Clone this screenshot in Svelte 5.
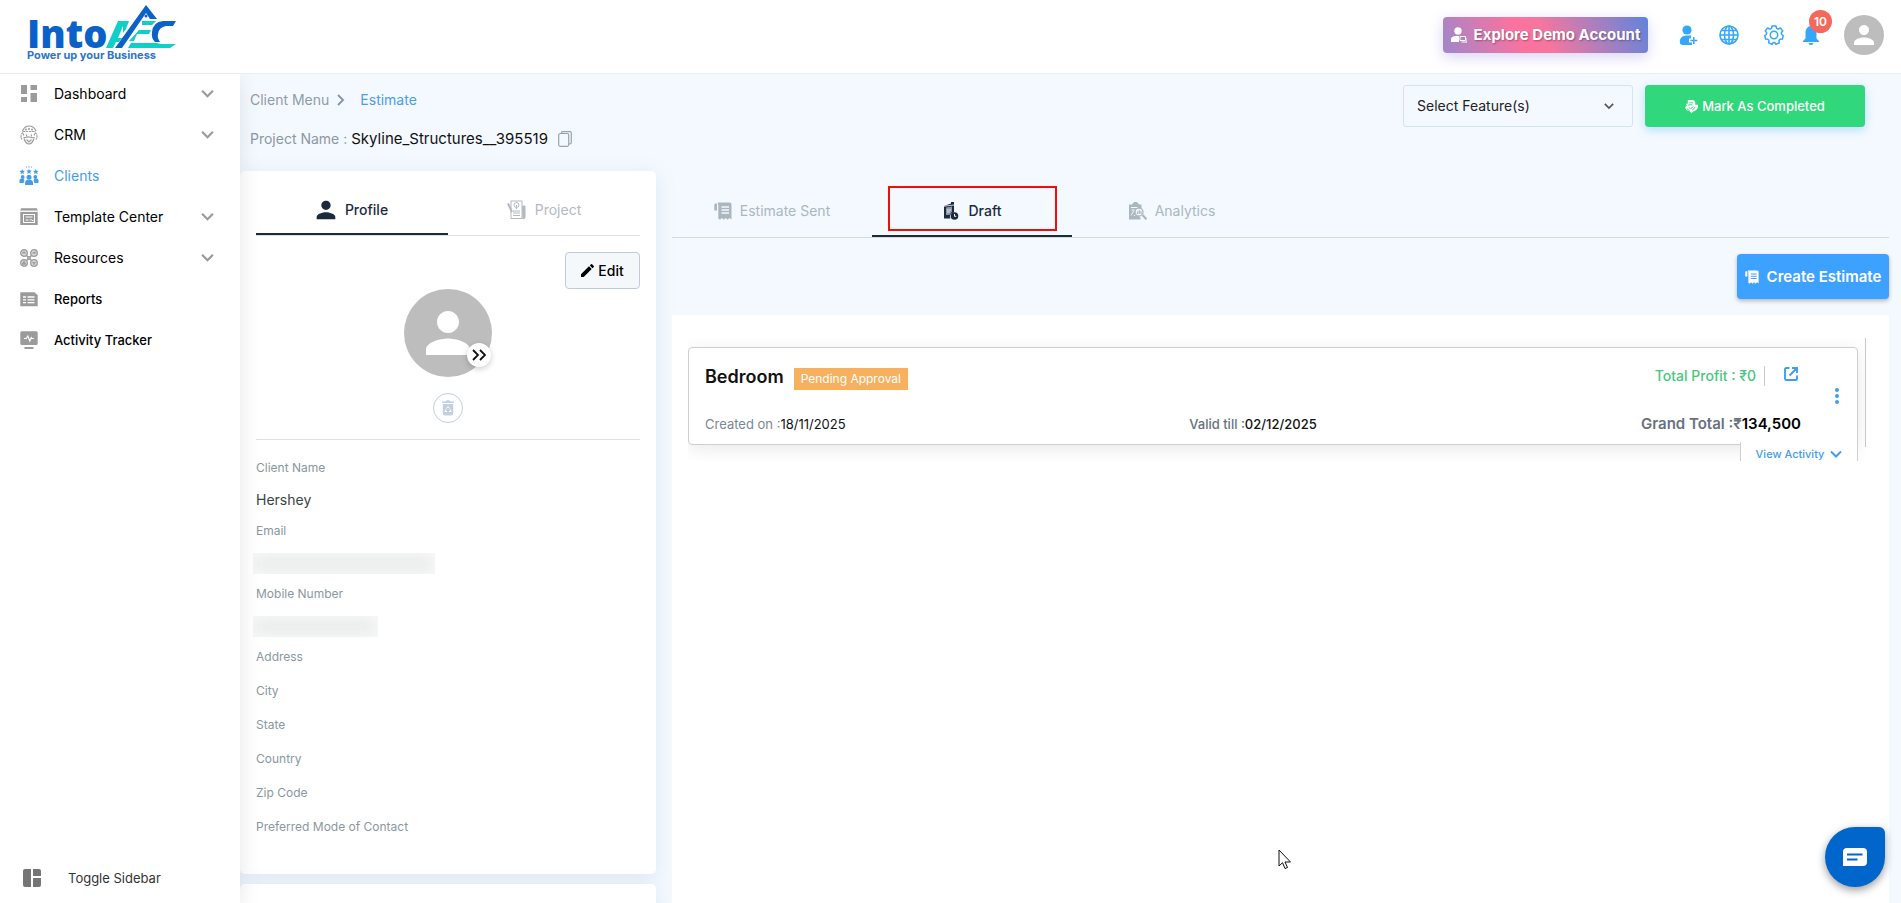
<script>
  const nav = [
    { label: 'Dashboard', icon: 'dashboard', more: true },
    { label: 'CRM', icon: 'crm', more: true },
    { label: 'Clients', icon: 'clients', active: true },
    { label: 'Template Center', icon: 'template', more: true },
    { label: 'Resources', icon: 'resources', more: true },
    { label: 'Reports', icon: 'reports', strong: true },
    { label: 'Activity Tracker', icon: 'activity', strong: true }
  ];
  const fields = [
    { label: 'Client Name', value: 'Hershey' },
    { label: 'Email', masked: 182 },
    { label: 'Mobile Number', masked: 125 },
    { label: 'Address' },
    { label: 'City' },
    { label: 'State' },
    { label: 'Country' },
    { label: 'Zip Code' },
    { label: 'Preferred Mode of Contact' }
  ];
</script>

{#snippet chevron(w)}
  <svg width={w} height={w} viewBox="0 0 12 12" fill="none" stroke="currentColor" stroke-width="2" aria-hidden="true"><path d="M1 3.5 6 8.5 11 3.5" /></svg>
{/snippet}

{#snippet receipt(w)}
  <svg width={w} height={w} viewBox="0 0 18 18" aria-hidden="true">
    <path fill="currentColor" d="M1.8 1.5C.8 1.5.3 2.200.3 3v5.500h2.700V1.500zM5 .5h10.500a2 2 0 0 1 2 2V17.500l-2-1.600-1.900 1.900-1.900-1.900-1.900 1.900-1.900-1.900-1.900 1.900-1.700-1.400V4.500C4.200 2.700 4.300 1.500 3.300.8z" />
    <path stroke="var(--cut)" stroke-width="1.300" d="M7.500 5H15M7.500 8H15M7.500 11H15" />
  </svg>
{/snippet}

{#snippet person()}
  <svg class="person" viewBox="0 0 24 24" aria-hidden="true"><path fill="currentColor" d="M12 12c2.210 0 4-1.790 4-4s-1.790-4-4-4-4 1.790-4 4 1.790 4 4 4zm0 2c-2.670 0-8 1.340-8 4v2h16v-2c0-2.660-5.330-4-8-4z" /></svg>
{/snippet}

{#snippet navIcon(name)}
  <svg width="20" height="20" viewBox="0 0 20 20" fill="currentColor" aria-hidden="true">
    {#if name === 'dashboard'}
      <path d="M2 1h6v9H2zM11.500 1H18v5h-6.500zM2 13h6v5H2zM11.500 9H18v9h-6.500z" />
    {:else if name === 'crm'}
      <g fill="none" stroke="currentColor" stroke-width="1.200">
        <path d="M3.500 6C5 2.500 7.500 1 10 1s5.500 1.500 7 5" />
        <path d="M3.500 6.500h13M4 7.500C1.500 9 1.500 12.500 3 14.500M16 7.500c2.500 1.500 2.500 5 1 7" stroke-dasharray="2.500 .7" />
        <path d="M4.500 12c1 1.500 3.500-.5 5.500 0s4.500 1.500 5.500 0M5 13.500c1 3 3 5.500 5 5.500s4-2.500 5-5.500M7.500 14.500 10 17l2.500-2.500" />
        <path d="M4.500 8.500v2M15.500 8.500v2M7.500 9.500v2M12.500 9.500v2" />
      </g>
      <circle cx="7" cy="4.600" r="1" /><circle cx="10" cy="4" r="1" /><circle cx="13" cy="4.600" r="1" />
    {:else if name === 'clients'}
      <path d="m3.200 3 .8 1.700 1.900.2-1.400 1.300.4 1.900-1.700-.9-1.700.9.400-1.900L.5 4.900l1.900-.2zM10 2.700l.8 1.700 1.900.2-1.400 1.300.4 1.900-1.700-.9-1.700.9.400-1.900-1.400-1.300 1.900-.2zM16.800 3l.8 1.700 1.900.2-1.400 1.300.4 1.900-1.700-.9-1.700.9.400-1.900-1.400-1.300 1.900-.2z" />
      <circle cx="3.700" cy="11" r="1.900" /><circle cx="10" cy="11.200" r="2.500" /><circle cx="16.300" cy="11" r="1.900" />
      <path d="M.5 17v-1.500a2.500 2.500 0 0 1 5-.8c-.6.600-.8 1.300-.8 2.300zM6 19v-2a4 3.200 0 0 1 8 0v2zM19.500 17v-1.500a2.500 2.500 0 0 0-5-.8c.6.600.8 1.300.8 2.300z" />
      <path d="M10 0v1.600M7.200.4l.5 1.300M12.800.4l-.5 1.300" stroke="currentColor" stroke-width=".8" />
    {:else if name === 'template'}
      <path d="M1.300 4.700h17.400V18H1.300zM2 1.200h16l.7 2.600H1.300z" />
      <g fill="none" stroke="#fff" stroke-width="1"><rect x="4.500" y="7.500" width="11" height="8" /><path d="M6.500 10h7M6.500 13h3M11 13.500l1-1.200 1 1.200h1.500M2 4.200h16" /></g>
    {:else if name === 'resources'}
      <g fill="#d9d9d9" stroke="currentColor" stroke-width="1.300">
        <path fill="none" d="M7 7l6 6M13 7l-6 6" />
        <circle cx="5" cy="5" r="3.300" /><circle cx="15" cy="5" r="3.300" /><circle cx="5" cy="15" r="3.300" /><circle cx="15" cy="15" r="3.300" />
        <path fill="none" d="M3.500 5.500 5 4l1.500 1.500M13.500 5H16V3.500M3.500 16h3L5 13.500zM13.500 14 15 15.500l1.500-1.500M15 15.500V17" />
        <circle cx="10" cy="10" r="1.300" />
      </g>
    {:else if name === 'reports'}
      <path d="M1.300 3.200h14L18.700 6v11.200H1.300z" />
      <path d="M4 8h3M8.500 8h7M4 10.800h3M8.500 10.800h7M4 13.600h3M8.500 13.600h7" stroke="#fff" stroke-width="1.300" />
    {:else}
      <path d="M2.800 1.300h14.400a1.500 1.500 0 0 1 1.500 1.500v10.700a1.500 1.500 0 0 1-1.500 1.500H2.800a1.500 1.500 0 0 1-1.500-1.500V2.800a1.500 1.500 0 0 1 1.500-1.500zM5.500 17h9v2h-9z" />
      <path d="M5 8.500h2.300L8.800 6l2 5 1.500-3.500.8 1H15" fill="none" stroke="#fff" stroke-width="1.100" />
    {/if}
  </svg>
{/snippet}

<div class="shell">
  <header class="topbar">
    <a class="logo" href="#home" aria-label="IntoAEC, Power up your Business">
      <svg width="152" height="60" viewBox="0 0 152 60">
        <text x="0" y="43" font-size="38" font-weight="800" fill="#0a62c9">Into</text>
        <path fill="#10cfc9" d="M79 43 91 16h11l-3 8-3 4v-7l-5 12h4l-3 4h-3l-3 6z" />
        <path fill="#10cfc9" d="M104 38h26l4 1h15l-6 4h-42z" />
        <path fill="#10cfc9" d="M115 16h14l-4 4h-10zM112 25h12l-2 4h-12l-3 7h-5z" />
        <path fill="#0a62c9" d="M88 43 119 0l11 14h-7l-4-6-24 35z" />
        <path fill="#0a62c9" d="M149 16h-13q-10 1-11 11-1 6 3 10h5q-3-4-2-8 1-7 8-8h7z" />
        <circle cx="119" cy="11" r="1.500" fill="#0a62c9" />
        <text x="0" y="54" font-size="11" font-weight="700" fill="#2f74cc" class="tagline">Power up your Business</text>
      </svg>
    </a>
    <div class="actions">
      <button class="demo">
        <svg width="16" height="16" viewBox="0 0 16 16" aria-hidden="true"><circle cx="7" cy="4" r="3.700" fill="#fff" /><path fill="#fff" d="M0 15v-2.500C0 9.500 3 9 5 9h3v6z" /><path fill="none" stroke="#fff" d="M9 9.500h5.500v4H9zM10.500 15H16v-4" /></svg>
        Explore Demo Account
      </button>
      <button class="icon-btn add" aria-label="Add user">
        <svg width="20" height="20" viewBox="0 0 20 20"><circle cx="8" cy="5" r="4.600" fill="currentColor" /><path fill="currentColor" d="M8 10.500h4v3h-2v4h3V20H4a3.200 3.200 0 0 1-3.200-3.200C.8 12.500 4 10.500 8 10.500z" /><path stroke="currentColor" stroke-width="1.500" d="M14.800 12v7M11.300 15.500h7" /></svg>
      </button>
      <button class="icon-btn globe" aria-label="Language">
        <svg width="20" height="20" viewBox="0 0 20 20" fill="none" stroke="currentColor" stroke-width="1.600"><circle cx="10" cy="10" r="9" /><ellipse cx="10" cy="10" rx="4.500" ry="9" /><path d="M10 1v18M1 10h18M2.500 5.500h15M2.500 14.500h15" /></svg>
      </button>
      <button class="icon-btn gear" aria-label="Settings">
        <svg width="20" height="20" viewBox="0 0 20 20" fill="none" stroke="currentColor" stroke-width="1.500"><path stroke-linejoin="round" d="M8 1h4l.5 2.300 1.600.8 2.300-1.100 2.400 2.900-1.500 1.900.4 1.700 1.500 1-.8 3.500-2.300.2-1.100 1.400.3 2.300-3.300 1.400L10.700 17.500H9.300L8 19.300l-3.300-1.400.3-2.300-1.100-1.400-2.300-.2-.8-3.500 1.500-1 .4-1.700L1.200 5.900 3.600 3l2.300 1.100 1.600-.8z" /><circle cx="10" cy="10" r="3.700" /></svg>
      </button>
      <button class="icon-btn bell" aria-label="Notifications, 10 new">
        <svg width="18" height="20" viewBox="0 0 18 20" fill="currentColor"><path d="M9 1c4 .6 5.500 3.500 5.500 7v5.500L17 16v1H1v-1l2.500-2.500V8C3.500 4.500 5 1.600 9 1zM6.500 18h5a2.500 2 0 0 1-5 0z" /></svg>
        <span class="badge">10</span>
      </button>
      <button class="avatar small" aria-label="Account">{@render person()}</button>
    </div>
  </header>

  <div class="body">
    <aside class="sidebar">
      <nav>
        {#each nav as item}
          <a href="#nav" class:active={item.active} class:strong={item.strong}>
            <span class="nav-icon">{@render navIcon(item.icon)}</span>
            <span class="nav-label">{item.label}</span>
            {#if item.more}<span class="nav-more">{@render chevron(13)}</span>{/if}
          </a>
        {/each}
      </nav>
      <button class="toggle">
        <svg width="18" height="18" viewBox="0 0 18 18" fill="#757575" aria-hidden="true"><path d="M2 0h6v18H2a2 2 0 0 1-2-2V2a2 2 0 0 1 2-2zM10 0h6a2 2 0 0 1 2 2v5h-8zM10 9h8v7a2 2 0 0 1-2 2h-6z" /></svg>
        Toggle Sidebar
      </button>
    </aside>

    <main>
      <section class="page-head">
        <div>
          <div class="crumbs">
            <a href="#clients">Client Menu</a>
            <svg width="8" height="12" viewBox="0 0 8 12" fill="none" stroke="#8a97a8" stroke-width="2" aria-hidden="true"><path d="M1 1l5 5-5 5" /></svg>
            <a class="here" href="#estimate">Estimate</a>
          </div>
          <div class="project">
            <span class="muted">Project Name :</span>
            <span class="project-name">Skyline_Structures__395519</span>
            <button class="copy" aria-label="Copy project name">
              <svg width="14" height="16" viewBox="0 0 14 16" fill="none" stroke="#98a4ae" stroke-width="1.200"><rect x=".7" y="2.500" width="10" height="12.800" rx="1.500" /><path d="M3.500 2.500V1.800q0-1.100 1.100-1.100h7.300q1.400 0 1.400 1.400v9.500q0 1.400-1.400 1.400h-1" /></svg>
            </button>
          </div>
        </div>
        <div class="head-actions">
          <div class="select">
            <select aria-label="Select Feature(s)"><option>Select Feature(s)</option></select>
            {@render chevron(10)}
          </div>
          <button class="done">
            <svg width="13" height="13" viewBox="0 0 14 14" aria-hidden="true"><path fill="#fff" d="M3 0h6l2 2v3h3v3l-2 3-3 1.500L7 14l-2-2-3-1-2-3 2-2-1-2h2z" /><path fill="none" stroke="#30d77b" d="M4.500 3h4M3 5.500l5-.5M4 8l2 1.500L9 7M2 9.500l3 2M11 7.500 8 11" /></svg>
            Mark As Completed
          </button>
        </div>
      </section>

      <div class="columns">
        <div class="left">
          <section class="card">
            <div class="card-tabs">
              <button class="on">{@render person()}Profile</button>
              <button>
                <svg width="19" height="20" viewBox="0 0 19 20" fill="none" stroke="currentColor" aria-hidden="true"><path fill="currentColor" d="M15.500 6H18v12l-2 1z" /><rect x="4" y="1" width="11" height="17.500" /><circle cx="9.500" cy="5" r="2.500" /><path d="M9.500 5v4M6 11h7M6 13h7M6 15.500h7" /><path stroke-width="2" d="M1 3.500 5 12" /></svg>
                Project
              </button>
            </div>
            <div class="edit-row">
              <button class="edit">
                <svg width="13" height="13" viewBox="3 3 18 18" aria-hidden="true"><path d="M3 17.250V21h3.750L17.810 9.940l-3.750-3.750L3 17.250zM20.710 7.040a1 1 0 0 0 0-1.410l-2.340-2.340a1 1 0 0 0-1.410 0l-1.830 1.830 3.750 3.750 1.830-1.830z" /></svg>
                Edit
              </button>
            </div>
            <div class="photo">
              <div class="avatar large">
                {@render person()}
                <button class="swap" aria-label="Change photo">
                  <svg width="14" height="12" viewBox="0 0 14 12" fill="none" stroke="#111" stroke-width="1.800"><path d="M1 1l5 5-5 5M8 1l5 5-5 5" /></svg>
                </button>
              </div>
              <button class="trash" aria-label="Remove photo">
                <svg width="12" height="16" viewBox="0 0 12 16"><path fill="#c3cfdf" d="M0 1.500h3.500L4.500.3h3l1 1.200H12V3H0zM.8 4h10.400v9.500a2 2 0 0 1-2 2H2.800a2 2 0 0 1-2-2z" /><path fill="none" stroke="#fff" d="M4.500 8.500 6 6.500l1.500 2M8.300 9.500l.7 2H7M5 11.500H3l.8-2" /></svg>
              </button>
            </div>
            <dl>
              {#each fields as f}
                <dt>{f.label}</dt>
                <dd class:filled={f.value || f.masked}>
                  {#if f.masked}<span class="mask" style="width: {f.masked}px"></span>{:else}{f.value ?? ''}{/if}
                </dd>
              {/each}
            </dl>
          </section>
          <section class="card next"></section>
        </div>

        <div class="right">
          <div class="tabs">
            <button>{@render receipt(18)}Estimate Sent</button>
            <button class="on">
              <svg width="16" height="18" viewBox="0 0 16 18" aria-hidden="true"><path fill="currentColor" d="M1 4 8 1.500V0h3v10.500a4 4 0 0 0-3.500 6H1z" /><path fill="#8d97a5" d="M3 5.500 9 4.500v5L6.500 13H3z" /><path stroke="#f4f9ff" stroke-width=".8" d="M1 4.200 11 3M4 8h4M4 10h3" /><circle cx="11.500" cy="14" r="3.800" fill="currentColor" /><path fill="none" stroke="#fff" d="M11.500 12v2.300h1.800" /></svg>
              Draft
              <span class="highlight"></span>
            </button>
            <button>
              <svg width="18" height="18" viewBox="0 0 18 18" aria-hidden="true"><path fill="currentColor" d="M0 2.500h3L5 0h3l2 2.500h2.500v4a5 5 0 0 0-1 9V17.500H0z" /><path fill="none" stroke="#f4f9ff" d="M2 5.500h7M2 13.500l3-5M5 14l2-2M2.500 8h3" /><circle cx="10" cy="10" r="4" fill="#f4f9ff" stroke="currentColor" stroke-width="1.300" /><path fill="none" stroke="currentColor" stroke-width="1.200" d="M8.500 12v-2.500M10.200 12V8M12 12v-3" /><path stroke="currentColor" stroke-width="2.200" d="m13.500 13 4 4.300" /></svg>
              Analytics
            </button>
          </div>
          <div class="create-row">
            <button class="create">{@render receipt(14)}Create Estimate</button>
          </div>
          <div class="panel">
            <div class="list">
              <article>
                <div class="grid">
                  <div class="title"><h2>Bedroom</h2><span class="status">Pending Approval</span></div>
                  <div class="profit">
                    <span>Total Profit : ₹0</span><i></i>
                    <button aria-label="Open estimate">
                      <svg width="14" height="14" viewBox="0 0 14 14" fill="none" stroke="currentColor" stroke-width="1.900"><path d="M5.500 1H2.300Q1 1 1 2.300v9.400Q1 13 2.300 13h9.400q1.300 0 1.300-1.300V8.500M8 1h5v5M13 1 5.500 8.500" /></svg>
                    </button>
                  </div>
                  <div class="created"><span>Created on :</span>18/11/2025</div>
                  <div class="valid"><span>Valid till :</span>02/12/2025</div>
                  <div class="total"><span>Grand Total :₹</span>134,500</div>
                </div>
                <button class="kebab" aria-label="More options">
                  <svg width="6" height="16" viewBox="0 0 6 16" fill="currentColor"><circle cx="3" cy="2" r="2" /><circle cx="3" cy="8" r="2" /><circle cx="3" cy="14" r="2" /></svg>
                </button>
                <button class="activity">View Activity {@render chevron(12)}</button>
              </article>
            </div>
          </div>
        </div>
      </div>
    </main>
  </div>

  <button class="chat" aria-label="Open chat">
    <svg width="24" height="18" viewBox="0 0 24 18"><path fill="#fff" d="M4 0h16a4 4 0 0 1 4 4v10a4 4 0 0 1-4 4H0V4a4 4 0 0 1 4-4z" /><path stroke="#06c" stroke-width="2" d="M4 6.500h15.500M4 11.500h10.500" /></svg>
  </button>
  <svg class="pointer" width="14" height="21" viewBox="0 0 14 21" aria-hidden="true"><path fill="#fff" stroke="#111" d="M1 1v16l3.500-3.300L7 19.500l2.500-1L7 13h5.500z" /></svg>
</div>

<style>
  :global(body) { margin: 0; background: #f4f9ff; }
  * { box-sizing: border-box; }
  .shell {
    position: relative; display: flex; flex-direction: column; height: 100vh; overflow: hidden;
    font-family: Inter, "Noto Sans", sans-serif; font-size: 14px; line-height: 20px; color: #111;
  }
  button { font: inherit; color: inherit; background: none; border: 0; padding: 0; cursor: pointer; }
  a { color: inherit; text-decoration: none; }
  svg { display: block; flex: none; }

  .topbar {
    display: flex; align-items: center; justify-content: space-between; flex: none;
    height: 74px; padding: 0 17px 3px 27px; background: #fff; border-bottom: 1px solid #e6edf5;
  }
  .logo { font-family: "Open Sans", sans-serif; }
  .tagline { font-family: Inter, sans-serif; }
  .logo svg { overflow: visible; }
  .actions { display: flex; align-items: center; color: #35a7f8; }
  .demo {
    display: flex; align-items: center; justify-content: center; gap: 7px; width: 205px; height: 36px; margin-right: 31px;
    border-radius: 4px; color: #fff; font-size: 15px; font-weight: 700; text-shadow: 1px 1px 2px #0005; white-space: nowrap;
    background: linear-gradient(65deg, #a885c6 4%, #fb729f 38%, #f5769f 50%, #a080c2 78%, #5f83dd 100%);
    box-shadow: 0 4px 14px #8d7be055;
  }
  .icon-btn { position: relative; }
  .globe { margin-left: 20px; }
  .gear { margin-left: 25px; }
  .bell { margin-left: 18px; }
  .badge {
    position: absolute; left: 7px; top: -15px; width: 23px; height: 23px; border-radius: 50%;
    background: #f4695c; color: #fff; font-size: 12px; font-weight: 600; line-height: 23px;
  }
  .avatar { position: relative; border-radius: 50%; background: #bdbdbd; color: #fff; display: grid; place-items: center; }
  .person { width: 100%; }
  .avatar.small { width: 40px; height: 40px; margin-left: 24px; }
  .avatar.small .person { width: 30px; }
  .avatar.large { width: 88px; height: 88px; }
  .avatar.large .person { width: 66px; }

  .body { display: flex; flex: 1; min-height: 0; }
  .sidebar {
    position: relative; z-index: 2; display: flex; flex-direction: column; justify-content: space-between; flex: none;
    width: 240px; background: #fff; box-shadow: 0 6px 20px #0000001a; clip-path: inset(0 -24px 0 0);
  }
  nav { margin-top: -1px; }
  nav a { display: flex; align-items: center; height: 41px; padding: 0 26px 0 19px; color: #000; }
  .nav-icon { color: #9b9b9b; }
  .nav-label { flex: 1; padding-left: 15px; }
  .nav-more { color: #9a9a9a; }
  nav a.active, nav a.active .nav-icon { color: #429df0; }
  nav a.strong { font-size: 13px; font-weight: 500; }
  .toggle { display: flex; align-items: center; gap: 27px; height: 48px; padding-left: 23px; margin-bottom: 1px; font-size: 13px; color: #333; }

  main { display: flex; flex-direction: column; flex: 1; min-width: 0; padding-right: 12px; background: #f4f9ff; }
  .page-head { display: flex; justify-content: space-between; flex: none; height: 97px; padding: 11px 24px 0 10px; }
  .crumbs { display: flex; align-items: center; gap: 8px; height: 29px; color: #8f9bab; }
  .here { color: #4d9ee8; padding-left: 7px; }
  .project { display: flex; align-items: center; gap: 4px; margin-top: 15px; }
  .project-name { font-size: 15px; }
  .muted { color: #8b97a3; }
  .copy { margin-left: 6px; }
  .head-actions { display: flex; gap: 12px; height: 42px; }
  .select { display: flex; align-items: center; width: 230px; border: 1px solid #d3e4f5; border-radius: 3px; padding-right: 18px; color: #555; }
  select { flex: 1; height: 100%; min-width: 0; appearance: none; border: 0; background: none; padding: 0 13px; font: inherit; color: #222; }
  .done {
    display: flex; align-items: center; justify-content: center; gap: 4px; width: 220px; height: 42px;
    border-radius: 4px; background: #30d77b; color: #fff; font-size: 13px; font-weight: 500; box-shadow: 0 3px 10px #35a7f855;
  }

  .columns { display: flex; flex: 1; min-height: 0; gap: 16px; }
  .left { width: 416px; flex: none; }
  .card { height: 703px; padding: 16px; background: #fff; border-radius: 5px; box-shadow: 0 4px 20px #7f9bb52e; }
  .next { margin-top: 10px; height: 200px; }
  .card-tabs { display: flex; border-bottom: 1px solid #dcdfe3; }
  .card-tabs button { display: flex; align-items: center; justify-content: center; width: 50%; gap: 9px; height: 48px; border-bottom: 2px solid transparent; color: #b3bac1; }
  .card-tabs .on { border-color: #1e2a37; color: #1b2b3e; font-weight: 500; gap: 5px; padding-right: 4px; }
  .card-tabs .person { width: 28px; }
  .edit-row { display: flex; justify-content: flex-end; padding-top: 16px; }
  .edit { display: flex; align-items: center; justify-content: center; gap: 4px; width: 75px; height: 37px; border: 1px solid #c0cbd9; border-radius: 4px; background: #f4f8fa; color: #000; font-weight: 500; }
  .photo { display: flex; flex-direction: column; align-items: center; gap: 16px; padding-bottom: 16px; border-bottom: 1px solid #dcdfe3; }
  .swap { position: absolute; right: 1px; bottom: 10px; display: grid; place-items: center; width: 24px; height: 24px; border-radius: 50%; background: #fff; box-shadow: 0 2px 6px #0003; }
  .trash { display: grid; place-items: center; width: 30px; height: 30px; border: 1px solid #c3cfdb; border-radius: 50%; }
  dl { margin: 20px 0 0; }
  dt { font-size: 12px; line-height: 16px; color: #8a979f; }
  dd { margin: 0; height: 18px; color: #3b4348; }
  dd.filled { height: 47px; padding-top: 14px; }
  .mask { display: block; height: 21px; margin-left: -3px; background: #ebedec; box-shadow: inset 0 0 14px 1px #fafafa; }

  .right { display: flex; flex-direction: column; flex: 1; min-width: 0; }
  .tabs { --cut: #f4f9ff; display: flex; flex: none; height: 67px; padding-top: 16px; border-bottom: 1px solid #d2dae6; }
  .tabs button { position: relative; display: flex; align-items: center; justify-content: center; gap: 8px; width: 200px; border-bottom: 2px solid transparent; color: #abb7c0; }
  .tabs .on { border-color: #1e2a37; color: #1b2b3e; font-weight: 500; gap: 10px; }
  .highlight { position: absolute; left: 16px; top: -1px; width: 169px; height: 45px; border: 2px solid #f40b0b; }
  .create-row { display: flex; justify-content: flex-end; padding: 16px 0; }
  .create { --cut: #3da2ff; display: flex; align-items: center; justify-content: center; gap: 8px; width: 152px; height: 45px; border-radius: 4px; background: #3da2ff; color: #fff; font-size: 15px; font-weight: 600; white-space: nowrap; box-shadow: 0 2px 4px #0004; }
  .panel { flex: 1; padding: 23px 23px 0 16px; background: #fff; }
  .list { height: 123px; overflow: hidden; padding: 9px 8px 0 0; position: relative; }
  .list::after { content: ""; position: absolute; right: 0; top: 0; width: 1px; height: 109px; background: #c8c8c8; }
  article { position: relative; display: flex; align-items: center; height: 98px; padding: 0 17px 0 16px; border: 1px solid #cfcfcf; border-radius: 4px; box-shadow: 0 4px 18px #00000017; }
  .grid { display: grid; grid-template-columns: 1fr 1fr 1fr; flex: 1; row-gap: 23px; align-items: center; padding-top: 5px; }
  .title { grid-column: span 2; display: flex; align-items: center; gap: 10px; }
  h2 { margin: 0; font-size: 18px; font-weight: 600; line-height: 28px; }
  .status { padding: 0 7px; margin-top: 3px; background: #f6b05e; color: #fff; font-size: 12px; line-height: 22px; }
  .profit { display: flex; align-items: center; justify-content: flex-end; gap: 8px; padding: 0 3px 2px 0; color: #48c77d; font-weight: 500; }
  .profit i { width: 1px; height: 20px; background: #c9c9c9; }
  .profit button { color: #429df0; padding: 0 0 4px 11px; }
  .created { font-size: 13px; }
  .created span { color: #7b8794; }
  .valid { justify-self: center; font-size: 13px; font-weight: 500; }
  .valid span, .total span { color: #66727f; }
  .total { justify-self: end; font-size: 15px; font-weight: 600; color: #000; }
  .kebab { margin-left: 33px; color: #429df0; }
  .activity { position: absolute; right: -1px; top: 94px; display: flex; align-items: center; justify-content: center; gap: 6px; width: 118px; height: 24px; border: solid #cfcfcf; border-width: 0 1px; background: #fff; color: #429df0; font-size: 11px; font-weight: 500; }

  .chat { position: absolute; z-index: 3; right: 16px; bottom: 16px; display: grid; place-items: center; width: 60px; height: 60px; border-radius: 50% 10% 50% 50%; background: #06c; box-shadow: 0 3px 8px #0006; }
  .pointer { position: absolute; z-index: 3; left: 1278px; top: 849px; }
</style>
